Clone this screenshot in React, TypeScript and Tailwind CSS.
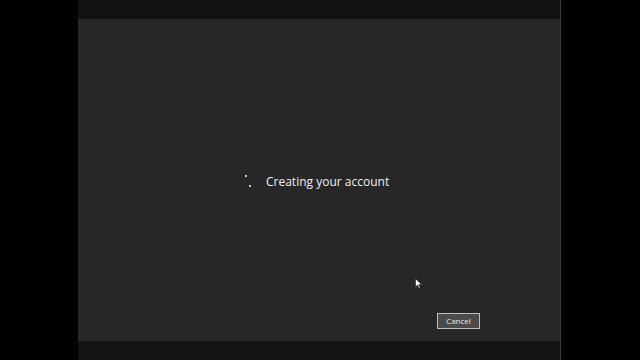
import React from "react";

function Spinner() {
  return (
    <div className="relative w-[12px] h-[14px] mr-[10px]">
      <span className="absolute left-[1px] top-0 w-[2px] h-[2px] rounded-full bg-white" />
      <span className="absolute left-0 top-[6px] w-[1px] h-[1px] rounded-full bg-[#777]" />
      <span className="absolute left-[5px] top-[10px] w-[2px] h-[2px] rounded-full bg-white" />
    </div>
  );
}

function Cursor() {
  return (
    <svg
      className="absolute left-[415px] top-[278px]"
      width="8"
      height="12"
      viewBox="0 0 8 12"
    >
      <path d="M0.5 0.5 L0.5 9 L2.5 7 L4 10.5 L5.2 10 L3.8 6.6 L6.5 6.6 Z" fill="#fff" stroke="#222" strokeWidth="0.6" />
    </svg>
  );
}

export default function App() {
  return (
    <div
      className="relative w-[640px] h-[360px] bg-black flex overflow-hidden"
      style={{ fontFamily: '"Open Sans", "Noto Sans", sans-serif' }}
    >
      <div className="w-[78px] shrink-0" />
      <div className="w-[483px] flex flex-col border-r border-[#3a3a3a]">
        <div className="h-[19px] bg-[#121212]" />
        <div className="flex-1 bg-[#272727] flex flex-col">
          <div className="h-[156px]" />
          <div className="flex items-center pl-[166px]">
            <Spinner />
            <span className="text-[12px] text-[#f0f0f0] leading-none">
              Creating your account
            </span>
          </div>
          <div className="flex-1" />
          <div className="flex justify-end pr-[80px] pb-[12px]">
            <button className="w-[43px] h-[16px] bg-[#4b4b4b] border border-[#bdbdbd] text-[8px] text-[#e8e8e8] leading-none flex items-center justify-center">
              Cancel
            </button>
          </div>
        </div>
        <div className="h-[19px] bg-[#131313]" />
      </div>
      <Cursor />
    </div>
  );
}
